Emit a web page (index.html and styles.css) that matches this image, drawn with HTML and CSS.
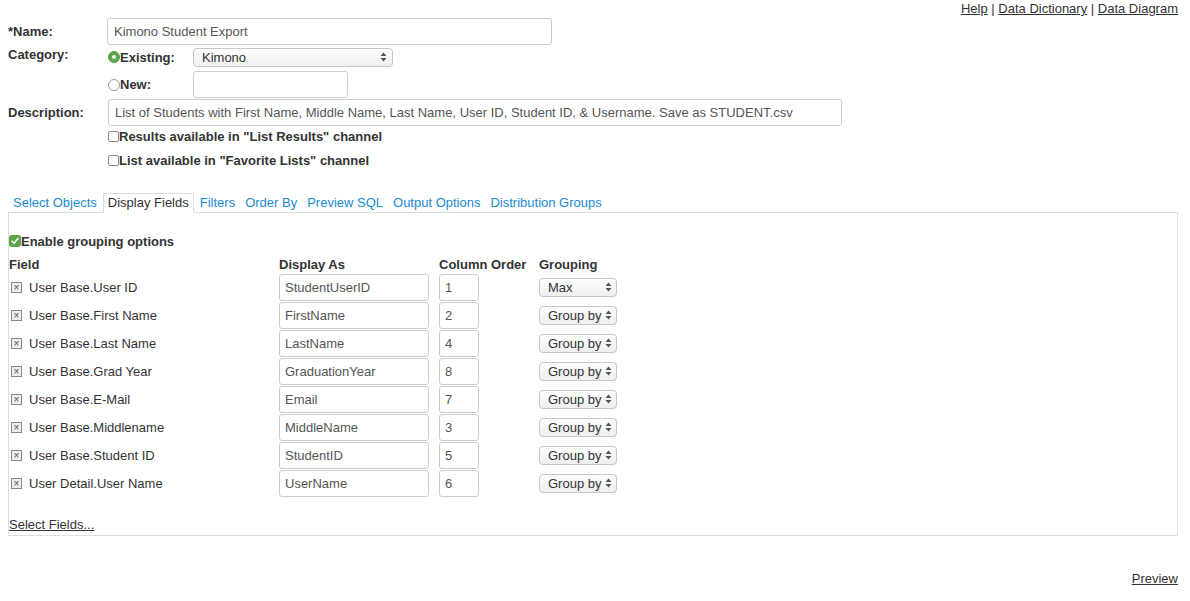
FILE: index.html
```html
<!DOCTYPE html>
<html>
<head>
<meta charset="utf-8">
<link rel="stylesheet" href="styles.css">
</head>
<body>
<div class="toplinks"><a href="#">Help</a> | <a href="#">Data Dictionary</a> | <a href="#">Data Diagram</a></div>

<div class="form">
  <div class="row r-name">
    <div class="label">*Name:</div>
    <div class="input w-name">Kimono Student Export</div>
  </div>
  <div class="row r-cat">
    <div class="label cat-label">Category:</div>
    <div class="cat-opts">
      <div class="sub sub-existing">
        <span class="radio on"></span><span class="opt-label">Existing:</span>
        <div class="select w-cat"><span>Kimono</span><svg class="arr" width="7" height="10" viewBox="0 0 7 10"><path d="M3.5 0.5 L6.5 4 H0.5 Z M3.5 9.5 L6.5 6 H0.5 Z" fill="#555"/></svg></div>
      </div>
      <div class="sub sub-new">
        <span class="radio"></span><span class="opt-label">New:</span>
        <div class="input w-new"></div>
      </div>
    </div>
  </div>
  <div class="row r-desc">
    <div class="label">Description:</div>
    <div class="input w-desc">List of Students with First Name, Middle Name, Last Name, User ID, Student ID, &amp; Username. Save as STUDENT.csv</div>
  </div>
  <div class="row r-chk1"><span class="chk"></span><b>Results available in "List Results" channel</b></div>
  <div class="row r-chk2"><span class="chk"></span><b>List available in "Favorite Lists" channel</b></div>
</div>

<div class="tabs">
  <a class="tab" href="#">Select Objects</a>
  <a class="tab active" href="#">Display Fields</a>
  <a class="tab" href="#">Filters</a>
  <a class="tab" href="#">Order By</a>
  <a class="tab" href="#">Preview SQL</a>
  <a class="tab" href="#">Output Options</a>
  <a class="tab" href="#">Distribution Groups</a>
</div>

<div class="panel">
  <div class="grouping"><span class="chk green"><svg width="12" height="12" viewBox="0 0 12 12"><path d="M3 6.2 L5.1 8.3 L9 3.6" stroke="#fff" stroke-width="1.6" fill="none" stroke-linecap="round" stroke-linejoin="round"/></svg></span><b>Enable grouping options</b></div>
  <div class="grid-row head">
    <div class="c-field">Field</div>
    <div class="c-disp">Display As</div>
    <div class="c-ord">Column Order</div>
    <div class="c-grp">Grouping</div>
  </div>

  <div class="grid-row">
    <div class="c-field"><span class="xbox">×</span>User Base.User ID</div>
    <div class="c-disp"><div class="input w-disp">StudentUserID</div></div>
    <div class="c-ord"><div class="input w-ord">1</div></div>
    <div class="c-grp"><div class="select w-grp"><span>Max</span><svg class="arr" width="7" height="10" viewBox="0 0 7 10"><path d="M3.5 0.5 L6.5 4 H0.5 Z M3.5 9.5 L6.5 6 H0.5 Z" fill="#555"/></svg></div></div>
  </div>
  <div class="grid-row">
    <div class="c-field"><span class="xbox">×</span>User Base.First Name</div>
    <div class="c-disp"><div class="input w-disp">FirstName</div></div>
    <div class="c-ord"><div class="input w-ord">2</div></div>
    <div class="c-grp"><div class="select w-grp"><span>Group by</span><svg class="arr" width="7" height="10" viewBox="0 0 7 10"><path d="M3.5 0.5 L6.5 4 H0.5 Z M3.5 9.5 L6.5 6 H0.5 Z" fill="#555"/></svg></div></div>
  </div>
  <div class="grid-row">
    <div class="c-field"><span class="xbox">×</span>User Base.Last Name</div>
    <div class="c-disp"><div class="input w-disp">LastName</div></div>
    <div class="c-ord"><div class="input w-ord">4</div></div>
    <div class="c-grp"><div class="select w-grp"><span>Group by</span><svg class="arr" width="7" height="10" viewBox="0 0 7 10"><path d="M3.5 0.5 L6.5 4 H0.5 Z M3.5 9.5 L6.5 6 H0.5 Z" fill="#555"/></svg></div></div>
  </div>
  <div class="grid-row">
    <div class="c-field"><span class="xbox">×</span>User Base.Grad Year</div>
    <div class="c-disp"><div class="input w-disp">GraduationYear</div></div>
    <div class="c-ord"><div class="input w-ord">8</div></div>
    <div class="c-grp"><div class="select w-grp"><span>Group by</span><svg class="arr" width="7" height="10" viewBox="0 0 7 10"><path d="M3.5 0.5 L6.5 4 H0.5 Z M3.5 9.5 L6.5 6 H0.5 Z" fill="#555"/></svg></div></div>
  </div>
  <div class="grid-row">
    <div class="c-field"><span class="xbox">×</span>User Base.E-Mail</div>
    <div class="c-disp"><div class="input w-disp">Email</div></div>
    <div class="c-ord"><div class="input w-ord">7</div></div>
    <div class="c-grp"><div class="select w-grp"><span>Group by</span><svg class="arr" width="7" height="10" viewBox="0 0 7 10"><path d="M3.5 0.5 L6.5 4 H0.5 Z M3.5 9.5 L6.5 6 H0.5 Z" fill="#555"/></svg></div></div>
  </div>
  <div class="grid-row">
    <div class="c-field"><span class="xbox">×</span>User Base.Middlename</div>
    <div class="c-disp"><div class="input w-disp">MiddleName</div></div>
    <div class="c-ord"><div class="input w-ord">3</div></div>
    <div class="c-grp"><div class="select w-grp"><span>Group by</span><svg class="arr" width="7" height="10" viewBox="0 0 7 10"><path d="M3.5 0.5 L6.5 4 H0.5 Z M3.5 9.5 L6.5 6 H0.5 Z" fill="#555"/></svg></div></div>
  </div>
  <div class="grid-row">
    <div class="c-field"><span class="xbox">×</span>User Base.Student ID</div>
    <div class="c-disp"><div class="input w-disp">StudentID</div></div>
    <div class="c-ord"><div class="input w-ord">5</div></div>
    <div class="c-grp"><div class="select w-grp"><span>Group by</span><svg class="arr" width="7" height="10" viewBox="0 0 7 10"><path d="M3.5 0.5 L6.5 4 H0.5 Z M3.5 9.5 L6.5 6 H0.5 Z" fill="#555"/></svg></div></div>
  </div>
  <div class="grid-row">
    <div class="c-field"><span class="xbox">×</span>User Detail.User Name</div>
    <div class="c-disp"><div class="input w-disp">UserName</div></div>
    <div class="c-ord"><div class="input w-ord">6</div></div>
    <div class="c-grp"><div class="select w-grp"><span>Group by</span><svg class="arr" width="7" height="10" viewBox="0 0 7 10"><path d="M3.5 0.5 L6.5 4 H0.5 Z M3.5 9.5 L6.5 6 H0.5 Z" fill="#555"/></svg></div></div>
  </div>

  <div class="selfields"><a href="#">Select Fields...</a></div>
</div>

<div class="preview"><a href="#">Preview</a></div>
</body>
</html>
```

FILE: styles.css
```css
html, body {
  margin: 0;
  padding: 0;
  background: #fff;
}
body {
  font-family: "Liberation Sans", Arial, Helvetica, sans-serif;
  font-size: 13px;
  color: #333;
  padding: 0 12px 0 8px;
}
a {
  color: #333;
}
.toplinks {
  text-align: right;
  height: 18px;
  line-height: 18px;
}
.form {
  display: flex;
  flex-direction: column;
}
.row {
  display: flex;
  align-items: center;
}
.label {
  width: 99px;
  font-weight: bold;
  flex: none;
}
.r-name {
  height: 27px;
}
.input {
  box-sizing: border-box;
  height: 27px;
  border: 1px solid #ccc;
  border-radius: 3px;
  background: #fff;
  color: #555;
  padding: 0 6px;
  line-height: 25px;
  white-space: nowrap;
  overflow: hidden;
}
.w-name { width: 445px; }
.r-cat {
  align-items: flex-start;
}
.cat-label {
  width: 100px;
  padding-top: 2px;
}
.cat-opts {
  display: flex;
  flex-direction: column;
}
.sub {
  display: flex;
  align-items: center;
}
.sub-existing {
  height: 24px;
  padding-bottom: 2px;
}
.sub-new { height: 27px; }
.radio {
  box-sizing: border-box;
  width: 12px;
  height: 12px;
  border-radius: 50%;
  border: 1px solid #999;
  background: #fff;
  flex: none;
  position: relative;
}
.radio.on {
  border-color: #5da54b;
  background: #5da54b;
}
.radio.on::after {
  content: "";
  position: absolute;
  left: 3px;
  top: 3px;
  width: 4px;
  height: 4px;
  border-radius: 50%;
  background: #fff;
}
.opt-label {
  font-weight: bold;
  width: 73px;
}
.select {
  box-sizing: border-box;
  height: 19px;
  border: 1px solid #c6c6c6;
  border-radius: 4px;
  background: linear-gradient(#fdfdfd, #efefef);
  display: flex;
  align-items: center;
  justify-content: space-between;
  padding: 0 5px 0 8px;
  color: #333;
  line-height: 17px;
}
.w-cat { width: 200px; }
.w-new { width: 155px; }
.r-desc {
  height: 27px;
  margin-top: 1px;
}
.r-desc .label { width: 100px; }
.w-desc { width: 734px; }
.r-chk1 {
  height: 20px;
  padding-left: 100px;
}
.r-chk2 {
  height: 28px;
  padding-left: 100px;
}
.chk {
  box-sizing: border-box;
  width: 11px;
  height: 11px;
  border: 1px solid #888;
  border-radius: 2px;
  background: #fff;
  flex: none;
  display: inline-block;
}
.tabs {
  margin-top: 19px;
  display: flex;
  height: 20px;
  position: relative;
  z-index: 1;
}
.tab {
  display: block;
  box-sizing: border-box;
  height: 20px;
  line-height: 17px;
  padding: 0 4px;
  border: 1px solid transparent;
  border-bottom: 1px solid transparent;
  color: #1a8bd0;
  text-decoration: none;
}
.tab.active {
  color: #333;
  border-color: #ddd;
  border-bottom-color: #fff;
  background: #fff;
  margin: 0 1px;
}
.panel {
  margin-top: -1px;
  border: 1px solid #ddd;
  padding: 20px 0 2px 0;
}
.grouping {
  display: flex;
  align-items: center;
  height: 16px;
}
.chk.green {
  width: 12px;
  height: 12px;
  border: none;
  border-radius: 3px;
  background: #5da54b;
  display: flex;
  align-items: center;
  justify-content: center;
}
.grid-row {
  display: flex;
  align-items: center;
  height: 28px;
}
.grid-row.head {
  height: 23px;
  font-weight: bold;
  align-items: flex-end;
  padding-bottom: 1px;
}
.c-field {
  width: 270px;
  display: flex;
  align-items: center;
  flex: none;
}
.c-disp {
  width: 160px;
  flex: none;
}
.c-ord {
  width: 100px;
  flex: none;
}
.c-grp {
  flex: none;
}
.w-disp {
  width: 150px;
  padding-left: 5px;
}
.w-ord {
  width: 40px;
  padding-left: 5px;
}
.w-grp {
  width: 78px;
  padding-left: 8px;
  padding-right: 4px;
}
.xbox {
  box-sizing: border-box;
  width: 11px;
  height: 11px;
  border: 1px solid #888;
  background: #eee;
  font-size: 10px;
  line-height: 9px;
  text-align: center;
  color: #555;
  margin: 0 7px 0 2px;
  flex: none;
}
.selfields {
  margin-top: 20px;
  line-height: 16px;
}
.preview {
  margin-top: 35px;
  text-align: right;
  line-height: 16px;
}
```
